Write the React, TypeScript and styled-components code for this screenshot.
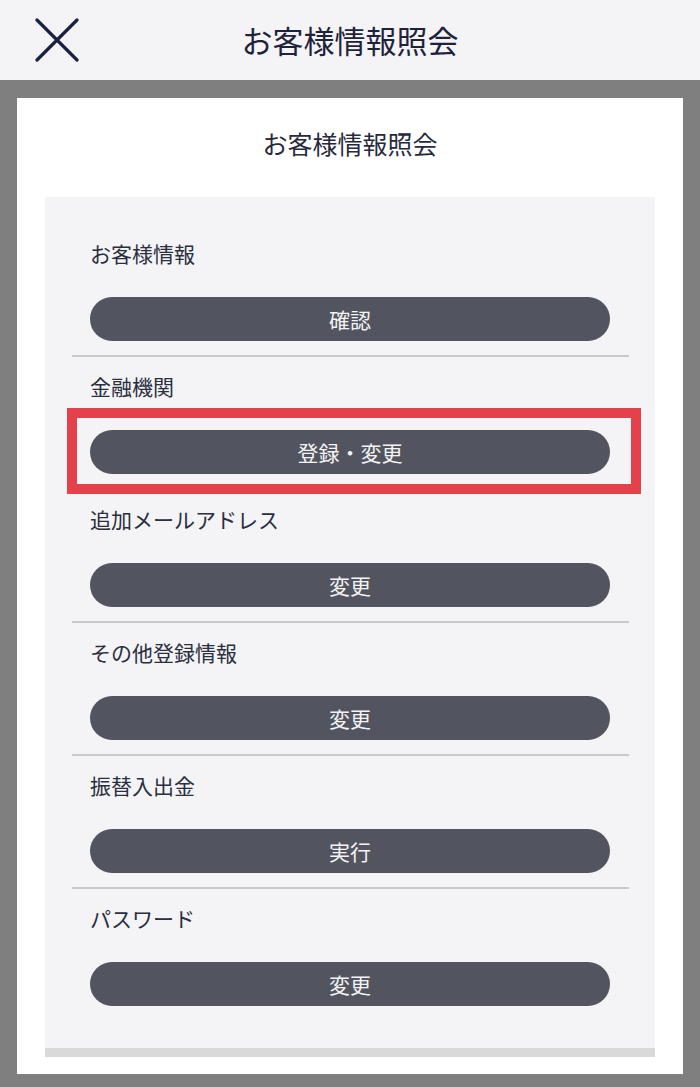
import React from 'react'
import styled, { createGlobalStyle } from 'styled-components'

const GlobalStyle = createGlobalStyle`
  html, body {
    margin: 0;
    padding: 0;
    background: #7f7f7f;
  }
  * {
    box-sizing: border-box;
  }
`

const Page = styled.div`
  display: flex;
  flex-direction: column;
  font-family: "Noto Sans CJK JP", "Noto Sans", sans-serif;
  height: 1087px;
  overflow: hidden;
  width: 700px;
`

const Header = styled.header`
  align-items: center;
  background: #f4f4f6;
  display: grid;
  grid-template-columns: 80px 1fr 80px;
  height: 80px;
`

const CloseButton = styled.button`
  background: none;
  border: none;
  cursor: pointer;
  display: flex;
  margin: 0 0 1px 35px;
  padding: 0;
`

const HeaderTitle = styled.h1`
  color: #1f2339;
  font-size: 31px;
  font-weight: 400;
  line-height: 40px;
  margin: 0;
  text-align: center;
`

const Overlay = styled.div`
  background: #7f7f7f;
  flex: 1;
  padding: 18px 17px 13px 17px;
`

const Card = styled.div`
  background: #ffffff;
  padding: 0 28px 17px;
`

const CardTitle = styled.h2`
  color: #262a3c;
  font-size: 25px;
  font-weight: 400;
  line-height: 34px;
  margin: 0 0 37px;
  padding-top: 28px;
  text-align: center;
`

const Panel = styled.div`
  background: #f4f4f7;
  border-bottom: 9px solid #d9d9d9;
  padding: 27px 0 28px;
`

const Section = styled.section<{ last?: boolean }>`
  border-bottom: ${p => (p.last ? 'none' : '2px solid #c9c9cd')};
  margin: 0 26px 0 27px;
  padding: 14px 19px 14px 18px;
`

const Label = styled.div`
  color: #2b2e3d;
  font-size: 21px;
  line-height: 30px;
`

const ButtonWrap = styled.div`
  margin-top: 29px;
  position: relative;
`

const ActionButton = styled.button`
  background: #52555f;
  border: none;
  border-radius: 22px;
  color: #f3f3f5;
  cursor: pointer;
  display: block;
  font-family: inherit;
  font-size: 21px;
  height: 44px;
  line-height: 44px;
  padding: 0;
  width: 100%;
`

const Highlight = styled.div`
  border: 10px solid #e5414b;
  bottom: -20px;
  left: -23px;
  pointer-events: none;
  position: absolute;
  right: -31px;
  top: -22px;
`

const items = [
  { label: 'お客様情報', action: '確認' },
  { label: '金融機関', action: '登録・変更', highlight: true },
  { label: '追加メールアドレス', action: '変更' },
  { label: 'その他登録情報', action: '変更' },
  { label: '振替入出金', action: '実行' },
  { label: 'パスワード', action: '変更' },
]

const CloseIcon: React.FC = () => (
  <svg width="44" height="44" viewBox="0 0 44 44" fill="none">
    <path
      d="M2 2 L42 42 M42 2 L2 42"
      stroke="#1b2142"
      strokeWidth="3.2"
      strokeLinecap="round"
    />
  </svg>
)

export default function App() {
  return (
    <>
      <GlobalStyle />
      <Page>
        <Header>
          <CloseButton aria-label="閉じる">
            <CloseIcon />
          </CloseButton>
          <HeaderTitle>お客様情報照会</HeaderTitle>
          <div />
        </Header>
        <Overlay>
          <Card>
            <CardTitle>お客様情報照会</CardTitle>
            <Panel>
              {items.map((item, i) => (
                <Section key={item.label} last={i === items.length - 1}>
                  <Label>{item.label}</Label>
                  <ButtonWrap>
                    <ActionButton>{item.action}</ActionButton>
                    {item.highlight && <Highlight />}
                  </ButtonWrap>
                </Section>
              ))}
            </Panel>
          </Card>
        </Overlay>
      </Page>
    </>
  )
}
